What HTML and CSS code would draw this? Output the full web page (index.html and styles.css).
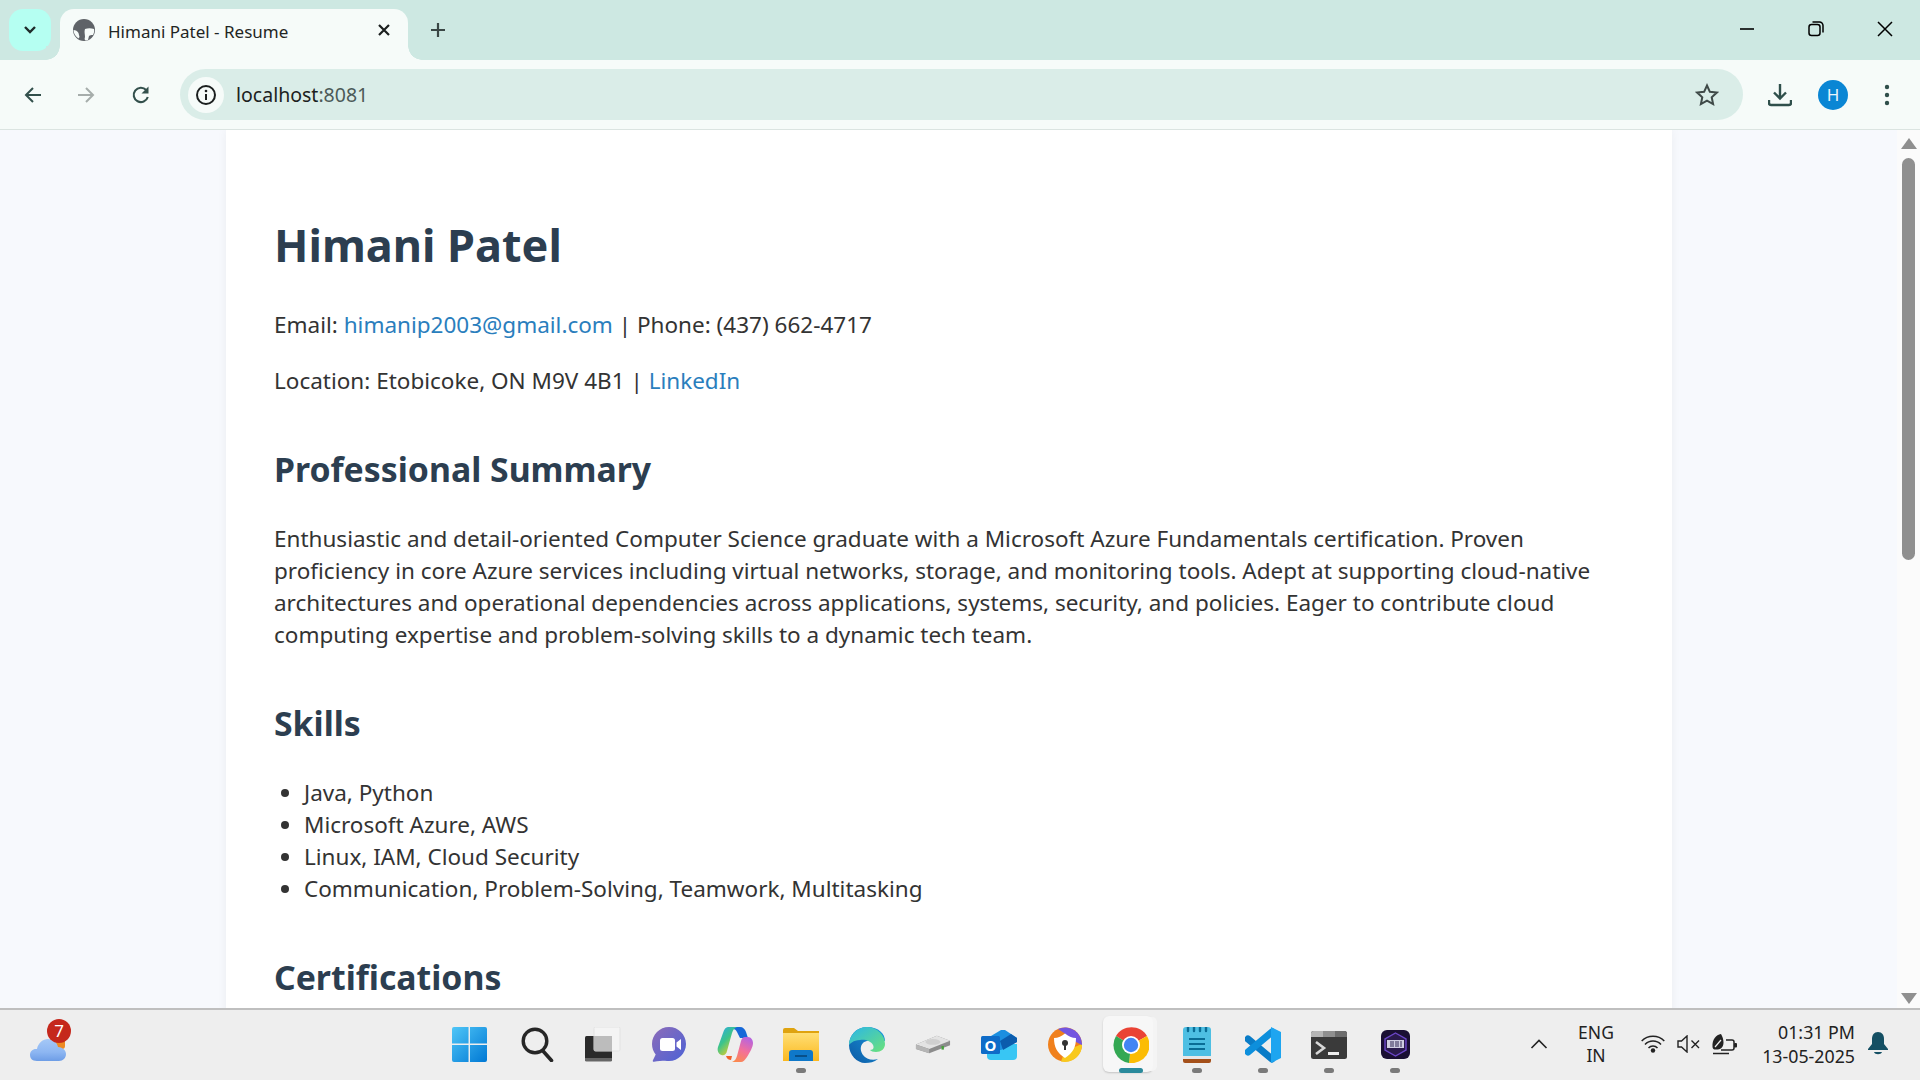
FILE: index.html
```html
<!DOCTYPE html>
<html lang="en">
<head>
<meta charset="utf-8">
<title>Himani Patel - Resume</title>
<link rel="stylesheet" href="styles.css">
</head>
<body>
<div class="window">
  <header class="tabstrip">
    <button class="tabsearch"><svg width="14" height="10" viewBox="0 0 14 10"><path d="M2 2l5 5 5-5" fill="none" stroke="#1f2b2a" stroke-width="2.400"/></svg></button>
    <div class="tab">
      <svg class="favicon" width="22" height="22" viewBox="0 0 22 22"><circle cx="11" cy="11" r="11" fill="#5f6368"/><path d="M12 10c3-1 6-1 9 0 .5 2 0 4-1 6-2 0-3 0-4 1l-1 4c-3 1-4 0-3-3 0-3-1-5 0-8z" fill="#f6fbf9"/><path d="M.5 11c2 0 4 1 5 3l1 4-1 1.500C2.500 17.500.5 14.500.5 11z" fill="#f6fbf9"/></svg>
      <span class="tabtitle">Himani Patel - Resume</span>
      <svg class="tabclose" width="14" height="14" viewBox="0 0 14 14"><path d="M2 2l10 10M12 2L2 12" stroke="#1b1f1f" stroke-width="2.200"/></svg>
    </div>
    <svg class="newtab" width="18" height="18" viewBox="0 0 18 18"><path d="M9 2v14M2 9h14" stroke="#3a4745" stroke-width="2.200"/></svg>
    <div class="wincontrols">
      <svg width="16" height="16" viewBox="0 0 16 16"><path d="M1 8h14" stroke="#000" stroke-width="1.600"/></svg>
      <svg width="16" height="16" viewBox="0 0 16 16"><rect x="1" y="3.500" width="11" height="11" rx="2.500" fill="none" stroke="#000" stroke-width="1.500"/><path d="M4.500 1h7a3.500 3.500 0 0 1 3.500 3.500v7" fill="none" stroke="#000" stroke-width="1.500"/></svg>
      <svg width="16" height="16" viewBox="0 0 16 16"><path d="M1 1l14 14M15 1L1 15" stroke="#000" stroke-width="1.500"/></svg>
    </div>
  </header>
  <nav class="toolbar">
    <svg class="navicon" width="20" height="20" viewBox="0 0 20 20"><path d="M18 10H3M10 3l-7 7 7 7" fill="none" stroke="#33504c" stroke-width="2"/></svg>
    <svg class="navicon" width="20" height="20" viewBox="0 0 20 20"><path d="M2 10h15M10 3l7 7-7 7" fill="none" stroke="#a6adab" stroke-width="2"/></svg>
    <svg class="navicon" width="20" height="20" viewBox="0 0 20 20"><path d="M16.800 12a7.200 7.200 0 1 1-1.600-7" fill="none" stroke="#33504c" stroke-width="2.100"/><path d="M17.500 1.500v7h-7z" fill="#33504c"/></svg>
    <div class="omnibox">
      <span class="infochip"><svg width="22" height="22" viewBox="0 0 22 22"><circle cx="11" cy="11" r="9" fill="none" stroke="#1b1f1f" stroke-width="2"/><path d="M11 10v6" stroke="#1b1f1f" stroke-width="2"/><circle cx="11" cy="7" r="1.300" fill="#1b1f1f"/></svg></span>
      <span class="url">localhost<span class="urlport">:8081</span></span>
      <svg class="star" width="24" height="24" viewBox="0 0 24 24"><path d="M12 2.500l2.900 6.300 6.900.8-5.100 4.700 1.400 6.800-6.100-3.400-6.100 3.400 1.400-6.800-5.100-4.700 6.900-.8z" fill="none" stroke="#3f4a48" stroke-width="2"/></svg>
    </div>
    <svg class="download" width="24" height="24" viewBox="0 0 24 24"><path d="M12 1v14M6 9.500l6 6 6-6" fill="none" stroke="#2f4f4b" stroke-width="2.400"/><path d="M1 17v3a2 2 0 0 0 2 2h18a2 2 0 0 0 2-2v-3" fill="none" stroke="#2f4f4b" stroke-width="2.400"/></svg>
    <span class="avatar">H</span>
    <svg class="kebab" width="6" height="22" viewBox="0 0 6 22"><circle cx="3" cy="3" r="2.200" fill="#2f4f4b"/><circle cx="3" cy="11" r="2.200" fill="#2f4f4b"/><circle cx="3" cy="19" r="2.200" fill="#2f4f4b"/></svg>
  </nav>
  <div class="viewport">
    <main class="page">
      <article class="resume">
        <h1>Himani Patel</h1>
        <p>Email: <a href="#">himanip2003@gmail.com</a> | Phone: (437) 662-4717</p>
        <p>Location: Etobicoke, ON M9V 4B1 | <a href="#">LinkedIn</a></p>
        <h2>Professional Summary</h2>
        <p>Enthusiastic and detail-oriented Computer Science graduate with a Microsoft Azure Fundamentals certification. Proven<br>proficiency in core Azure services including virtual networks, storage, and monitoring tools. Adept at supporting cloud-native<br>architectures and operational dependencies across applications, systems, security, and policies. Eager to contribute cloud<br>computing expertise and problem-solving skills to a dynamic tech team.</p>
        <h2>Skills</h2>
        <ul>
          <li>Java, Python</li>
          <li>Microsoft Azure, AWS</li>
          <li>Linux, IAM, Cloud Security</li>
          <li>Communication, Problem-Solving, Teamwork, Multitasking</li>
        </ul>
        <h2>Certifications</h2>
      </article>
    </main>
    <aside class="scrollbar">
      <svg width="16" height="11" viewBox="0 0 16 11"><path d="M8 0l8 11H0z" fill="#8f8f8f"/></svg>
      <div class="thumb"></div>
      <svg class="scrolldown" width="16" height="11" viewBox="0 0 16 11"><path d="M8 11l8-11H0z" fill="#8f8f8f"/></svg>
    </aside>
  </div>
  <footer class="taskbar">
    <div class="tb-left">
      <div class="weather">
        <svg width="36" height="42" viewBox="0 0 36 42"><defs><linearGradient id="cl" x1="0" y1="0" x2="0" y2="1"><stop offset="0" stop-color="#a5c8f7"/><stop offset=".6" stop-color="#8db6f2"/><stop offset="1" stop-color="#6d9de6"/></linearGradient></defs><rect x="20" y="14" width="15" height="16" rx="3" fill="#ee8a22"/><path d="M7 42C2 42 0 39 0 36c0-4 3-6.500 7-6 1-6 6-10 11-10s9 3 10 8c4 0 8 3 8 7 0 4-3 7-7 7z" fill="url(#cl)"/></svg>
        <span class="badge">7</span>
      </div>
    </div>
    <div class="tb-apps">
      <div class="app start"><svg width="35" height="35" viewBox="0 0 36 36"><defs><linearGradient id="w1" x1="0" y1="0" x2="1" y2="1"><stop offset="0" stop-color="#4fc6f7"/><stop offset="1" stop-color="#0078d4"/></linearGradient></defs><path d="M0 2a2 2 0 0 1 2-2h15v17H0zM18.500 0H34a2 2 0 0 1 2 2v15H18.500zM0 18.500h17V36H2a2 2 0 0 1-2-2zM18.500 18.500H36V34a2 2 0 0 1-2 2H18.500z" fill="url(#w1)"/></svg></div>
      <div class="app"><svg width="33" height="35" viewBox="0 0 33 35"><circle cx="14" cy="14" r="11.800" fill="none" stroke="#262626" stroke-width="3.400"/><path d="M22 24l8.500 9.500" stroke="#262626" stroke-width="3.600" stroke-linecap="round"/></svg></div>
      <div class="app"><svg width="36" height="35" viewBox="0 0 36 35"><rect x="0" y="9" width="27" height="25" rx="1.500" fill="#2a2a2a"/><path d="M0 31h27v2a1.500 1.500 0 0 1-1.500 1.500h-24A1.500 1.500 0 0 1 0 33z" fill="#666"/><rect x="9" y="0" width="26" height="24" rx="1.500" fill="#f4f4f4" stroke="#e2e2e2"/><rect x="9" y="9" width="18" height="15" fill="#bcbcbc"/></svg></div>
      <div class="app"><svg width="34" height="35" viewBox="0 0 34 35"><defs><linearGradient id="mt" x1="0" y1="0" x2="1" y2="1"><stop offset="0" stop-color="#8d6cb8"/><stop offset="1" stop-color="#4c62d6"/></linearGradient></defs><path d="M17 0C7.600 0 0 7.600 0 17c0 4 1.400 7.700 3.700 10.500L.8 33.500c-.3.8.4 1.400 1.200 1.200 4-1 8-1 11-1 1.300.2 2.700.300 4 .300 9.400 0 17-7.600 17-17S26.400 0 17 0z" fill="url(#mt)"/><rect x="8" y="11" width="15" height="13" rx="2.500" fill="#fff"/><path d="M24.500 15.500l4.500-3.500v11l-4.500-3.500z" fill="#fff"/></svg></div>
      <div class="app"><svg width="36" height="35" viewBox="0 0 36 35"><defs><linearGradient id="cp1" x1="0" y1="0" x2=".7" y2="1"><stop offset="0" stop-color="#2aa8ee"/><stop offset=".5" stop-color="#3cc48a"/><stop offset="1" stop-color="#f7d01c"/></linearGradient><linearGradient id="cp2" x1=".6" y1="0" x2=".2" y2="1"><stop offset="0" stop-color="#b964dd"/><stop offset=".5" stop-color="#f3709a"/><stop offset="1" stop-color="#fb8a4c"/></linearGradient></defs><path d="M11 0h12c3 0 5 2 6 5l2 6h-8l-3-6c-1-2-2-3-4-3z" fill="#1668d8"/><path d="M11 0h9c-3 1-4 3-5 6l-5 18c-.500 3-3 5-5.500 4C1 27 0 23 1 20L6 6c1-4 3-6 5-6z" fill="url(#cp1)"/><path d="M28 10h3c3 0 5 3 5 6 0 4-3 9-6 14-2 3-4 5-6 5H15c3-1 4-3 5-6l4-15c1-3 2-4 4-4z" fill="url(#cp2)"/><path d="M9 29h6l-1 4c-2 0-4-1-5-4z" fill="#f0602c"/></svg></div>
      <div class="app dot"><svg width="36" height="33" viewBox="0 0 36 33"><defs><linearGradient id="fo" x1="0" y1="0" x2="0" y2="1"><stop offset="0" stop-color="#ffdf75"/><stop offset="1" stop-color="#fbb81f"/></linearGradient></defs><path d="M0 2a2 2 0 0 1 2-2h9l4 3h21v5H0z" fill="#dfa30f"/><path d="M0 5h36v28H0z" fill="url(#fo)"/><path d="M6 33v-8a3 3 0 0 1 3-3h18a3 3 0 0 1 3 3v8z" fill="#0f78c9"/><rect x="12" y="27" width="12" height="2" fill="#08508a"/></svg></div>
      <div class="app"><svg width="36" height="36" viewBox="0 0 36 36"><defs><linearGradient id="eg1" x1="0" y1="1" x2="1" y2="0"><stop offset="0" stop-color="#0c59a4"/><stop offset="1" stop-color="#1b9de2"/></linearGradient><linearGradient id="eg2" x1="0" y1="0" x2="1" y2="1"><stop offset="0" stop-color="#2ab6e8"/><stop offset="1" stop-color="#6be27a"/></linearGradient></defs><path d="M18 0C6 0 0 10 0 18c0 10 8 18 16 18 5 0 9-1 13-4-6 2-12 0-15-4-3-4-3-9 0-12 3-3 12-4 22-2 0-7-6-14-18-14z" fill="url(#eg1)"/><path d="M18 0c10 0 18 8 18 17 0 5-4 8-9 8-3 0-5-1-6-2 4 0 4-3 3-5-2-4-8-6-13-5C4 13 1 17 0 18 0 8 8 0 18 0z" fill="url(#eg2)"/></svg></div>
      <div class="app"><svg width="36" height="19" viewBox="0 0 38 26" preserveAspectRatio="none"><path d="M1 13L23 1l14 7v6L15 25 1 19z" fill="#8c8c8c"/><path d="M1 13l14 6 22-11-14-7z" fill="#e3e3e3"/><path d="M1 13l14 6v6L1 19z" fill="#b5b5b5"/><ellipse cx="19" cy="9.500" rx="8" ry="4" fill="#cfcfcf"/><rect x="28" y="15" width="2.500" height="5" fill="#46a03c"/></svg></div>
      <div class="app"><svg width="36" height="30" viewBox="0 0 36 30"><path d="M6 14h30v12a4 4 0 0 1-4 4H10a4 4 0 0 1-4-4z" fill="#38c6f4"/><path d="M10 6L20 0h4l12 8v4L20 20H10z" fill="#1b8fe0"/><path d="M19 11L30 4l6 4v4L22 20z" fill="#0b5cad"/><rect x="0" y="6" width="19" height="18" rx="1.500" fill="#0f6cc8"/><text class="outlook-o" x="9.500" y="20.500" text-anchor="middle">O</text></svg></div>
      <div class="app"><svg width="34" height="35" viewBox="0 0 34 35"><circle cx="17" cy="17.500" r="17" fill="#f0801c"/><path d="M34 17a17 17 0 0 1-21 17.500L17 24z" fill="#f8c91d"/><path d="M10 2a17 17 0 0 1 24 16L28 15 16 6z" fill="#7355e0"/><path d="M6 11c4 0 8-2 11-4.500 3 2.500 7 4.500 11 4.500 0 9-3 15-11 20C9 26 6 20 6 11z" fill="#fff"/><circle cx="17" cy="16" r="3" fill="#333"/><path d="M16 17h2v6h-2z" fill="#333"/></svg></div>
      <div class="app active"><svg width="36" height="36" viewBox="0 0 36 36"><path d="M18 18L3 9a18 18 0 0 1 31 0z" fill="#ea4335"/><path d="M18 18l16-9a18 18 0 0 1-18 27z" fill="#fbbc04"/><path d="M18 18L16 36A18 18 0 0 1 3 9z" fill="#34a853"/><circle cx="18" cy="18" r="9" fill="#fff"/><circle cx="18" cy="18" r="7.200" fill="#4285f4"/></svg></div>
      <div class="app dot"><svg width="28" height="36" viewBox="0 0 28 36"><path d="M0 31h28v3a2 2 0 0 1-2 2H2a2 2 0 0 1-2-2z" fill="#a4501a"/><path d="M0 29h28v3H0z" fill="#e8e8e8"/><path d="M0 3a3 3 0 0 1 3-3h22a3 3 0 0 1 3 3v26H0z" fill="#4ebfe3"/><path d="M6 12h16M6 17h16M6 22h16" stroke="#0a6d96" stroke-width="2"/><path d="M5 0v4M11 0v4M17 0v4M23 0v4" stroke="#0a6d96" stroke-width="2.400" stroke-linecap="round"/></svg></div>
      <div class="app dot"><svg width="36" height="36" viewBox="0 0 36 36"><path d="M3 12l24 20" stroke="#0a7cc7" stroke-width="7" stroke-linecap="round"/><path d="M27 5L3 25" stroke="#0d8fdc" stroke-width="7" stroke-linecap="round"/><path d="M26 0l10 5v26l-10 5z" fill="#1ea5f0"/></svg></div>
      <div class="app dot"><svg width="36" height="28" viewBox="0 0 36 28"><rect width="36" height="28" rx="2.500" fill="#3a3a3a"/><path d="M0 6V2.500A2.500 2.500 0 0 1 2.500 0H12v6z" fill="#b5b5b5"/><path d="M12 0h12v6H12z" fill="#8f8f8f"/><path d="M24 0h9.500A2.500 2.500 0 0 1 36 2.500V6H24z" fill="#6d6d6d"/><path d="M5 11l8 6-8 6" fill="none" stroke="#d8d8d8" stroke-width="2.600"/><rect x="17" y="21" width="11" height="3" fill="#eee"/></svg></div>
      <div class="app dot"><svg width="29" height="29" viewBox="0 0 29 29"><rect width="29" height="29" rx="6" fill="#1a0f33"/><path d="M14.500 3l10.500 6v11l-10.500 6L4 20V9z" fill="#2a1a4c" stroke="#6b46c8" stroke-width="1.400"/><rect x="6" y="10" width="17" height="8" fill="#cfcde0"/><path d="M10 11v6M12 11v6M15 11v6M17 11v6M20 11v6" stroke="#332a55" stroke-width="1"/></svg></div>
    </div>
    <div class="tray">
      <svg class="chev" width="18" height="10" viewBox="0 0 18 10"><path d="M1.500 9L9 1.500 16.500 9" fill="none" stroke="#222" stroke-width="1.600"/></svg>
      <div class="lang"><span>ENG</span><span>IN</span></div>
      <div class="sysicons">
        <svg width="24" height="18" viewBox="0 0 24 18"><path d="M.7 6a16 16 0 0 1 22.600 0M4 9.500a11 11 0 0 1 16 0M7.500 13a6 6 0 0 1 9 0" fill="none" stroke="#222" stroke-width="1.500"/><circle cx="12" cy="15.500" r="2.200" fill="#222"/></svg>
        <svg width="23" height="18" viewBox="0 0 23 18"><path d="M1 6v6h3.500L10 17V1L4.500 6z" fill="none" stroke="#222" stroke-width="1.400"/><path d="M14.500 5.500l7.500 7.500M22 5.500L14.500 13" stroke="#222" stroke-width="1.400"/></svg>
        <svg width="25" height="21" viewBox="0 0 25 21"><path d="M14 6h6a2 2 0 0 1 2 2v6a2 2 0 0 1-2 2H9" fill="none" stroke="#222" stroke-width="1.500"/><rect x="22" y="9" width="3" height="4.500" rx="1" fill="#222"/><path d="M9 0C4 1 0 5 .5 13c.2 1.500 1 2.500 2 2.500 5 .5 9-1 9-7 0-3-1-6-2.500-8.500z" fill="#222"/><path d="M3 13L9 6" stroke="#eee" stroke-width="1.200"/><path d="M1 19.500h16" stroke="#222" stroke-width="1.500"/></svg>
      </div>
      <div class="clock"><span>01:31 PM</span><span>13-05-2025</span></div>
      <svg class="bell" width="20" height="24" viewBox="0 0 20 24"><path d="M10 0c-4 0-6 3-6 7v5l-4 5v1h20v-1l-4-5V7c0-4-2-7-6-7z" fill="#144f63"/><path d="M6 20h8c-1 3-7 3-8 0z" fill="#144f63"/></svg>
    </div>
  </footer>
</div>
</body>
</html>
```

FILE: styles.css
```css
* { box-sizing: border-box; }
html, body { margin: 0; height: 100%; overflow: hidden; }
body { font-family: "Noto Sans", "Open Sans", sans-serif; color: #333; }
.window { display: flex; flex-direction: column; height: 1080px; width: 1920px; background: #f6fbf9; }

.tabstrip { height: 60px; flex: none; background: #cde8e2; display: flex; align-items: flex-start; padding: 9px 0 0 9px; }
.tabsearch { width: 42px; height: 42px; border: 0; padding: 0; border-radius: 14px; background: #b5fff2; display: flex; align-items: center; justify-content: center; }
.tab { position: relative; width: 348px; height: 51px; margin-left: 9px; background: #f6fbf9; border-radius: 14px 14px 0 0; display: flex; align-items: center; padding: 0 17px 9px 13px; }
.tab::before, .tab::after { content: ""; position: absolute; bottom: 0; width: 14px; height: 14px; background: radial-gradient(circle at 0 0, #cde8e2 13.500px, #f6fbf9 14px); }
.tab::before { left: -14px; }
.tab::after { right: -14px; transform: scaleX(-1); }
.favicon { flex: none; margin-right: 13px; }
.tabtitle { flex: 1; margin-top: 2px; font-size: 17px; color: #1f2524; white-space: nowrap; }
.newtab { margin: 12px 0 0 21px; }
.wincontrols { margin-left: auto; display: flex; gap: 53px; padding: 12px 27px 0 0; }

.toolbar { position: relative; height: 70px; flex: none; background: #f6fbf9; border-radius: 14px 14px 0 0; border-bottom: 1px solid #dbe4e1; display: flex; align-items: center; padding: 0 22px 0 23px; }
.navicon + .navicon { margin-left: 33px; }
.navicon:nth-child(3) { margin-left: 35px; }
.omnibox { width: 1563px; height: 51px; margin-left: 29px; margin-right: 25px; background: #daede8; border-radius: 26px; display: flex; align-items: center; padding: 0 0 0 8px; flex: none; }
.infochip { width: 36px; height: 36px; border-radius: 50%; background: #f6fbf9; display: flex; align-items: center; justify-content: center; }
.url { margin-left: 12px; font-size: 19.500px; color: #1c2120; }
.urlport { color: #4c5a58; }
.star { margin-left: auto; margin-right: 24px; }
.download { flex: none; }
.avatar { flex: none; width: 30px; height: 30px; margin-left: 26px; border-radius: 50%; background: #0a86d4; color: #e8f4fb; font-size: 17px; display: flex; align-items: center; justify-content: center; }
.kebab { flex: none; margin-left: 36px; }

.viewport { flex: 1; min-height: 0; display: flex; overflow: hidden; }
.page { flex: 1; min-width: 0; background: #f7f9fd; padding-left: 226px; overflow: hidden; }
.resume { width: 1446px; background: #fff; box-shadow: 0 0 10px rgba(0,0,0,.05); padding: 83px 48px 200px; color: #333; font-size: 22.500px; line-height: 32px; }
.resume p { margin: 0 0 24px; white-space: nowrap; }
.resume a { color: #2a7ebd; text-decoration: none; }
h1 { margin: 0 0 32px; font-size: 45px; line-height: 64px; font-weight: 700; color: #2c3e50; }
h2 { margin: 48px 0 30px; font-size: 33.800px; line-height: 48px; font-weight: 700; color: #2c3e50; }
.resume ul { margin: 0 0 24px; padding-left: 30px; }

.scrollbar { flex: none; width: 23px; background: #fbfbfb; display: flex; flex-direction: column; align-items: center; padding: 8px 0 4px; }
.thumb { width: 13px; height: 402px; margin-top: 9px; border-radius: 7px; background: #8f8f8f; }
.scrolldown { margin-top: auto; }

.taskbar { height: 72px; flex: none; background: #eee; border-top: 2px solid #bfbfbf; display: flex; align-items: stretch; }
.tb-left { width: 438px; flex: none; padding: 9px 0 0 30px; }
.weather { position: relative; width: 36px; height: 42px; }
.weather svg { display: block; }
.badge { position: absolute; left: 17px; top: 0; width: 24px; height: 24px; border-radius: 50%; background: #c5281c; color: #fff; font-size: 17px; line-height: 24px; text-align: center; }
.tb-apps { display: flex; width: 990px; flex: none; }
.app { position: relative; flex: 0 0 66px; display: flex; align-items: center; justify-content: center; height: 70px; padding-bottom: 1px; }
.start svg { margin-left: -3px; }
.dot::after { content: ""; position: absolute; left: 28px; top: 58px; width: 10px; height: 5px; border-radius: 3px; background: #7a7a7a; }
.active::before { content: ""; position: absolute; left: 5px; top: 6px; width: 50px; height: 56px; border-radius: 6px; background: #f7f7f7; box-shadow: 5px 0 0 -1px #f4f4f4, 0 1px 2px rgba(0,0,0,.18); }
.active svg { position: relative; }
.active::after { content: ""; position: absolute; left: 21px; top: 58px; width: 24px; height: 5px; border-radius: 3px; background: #2a8a9c; }
.outlook-o { font-family: "Noto Sans", sans-serif; font-size: 15px; font-weight: 700; fill: #fff; }
.tray { flex: 1; display: flex; align-items: center; font-size: 17.500px; color: #222; padding-bottom: 2px; }
.chev { margin-left: 102px; }
.lang { width: 60px; margin-left: 18px; display: flex; flex-direction: column; align-items: center; line-height: 23px; }
.sysicons { display: flex; align-items: center; gap: 12px; margin-left: 15px; }
.clock { flex: 1; display: flex; flex-direction: column; align-items: flex-end; font-size: 17.800px; line-height: 24px; }
.bell { margin: 0 32px 0 13px; flex: none; }
```
